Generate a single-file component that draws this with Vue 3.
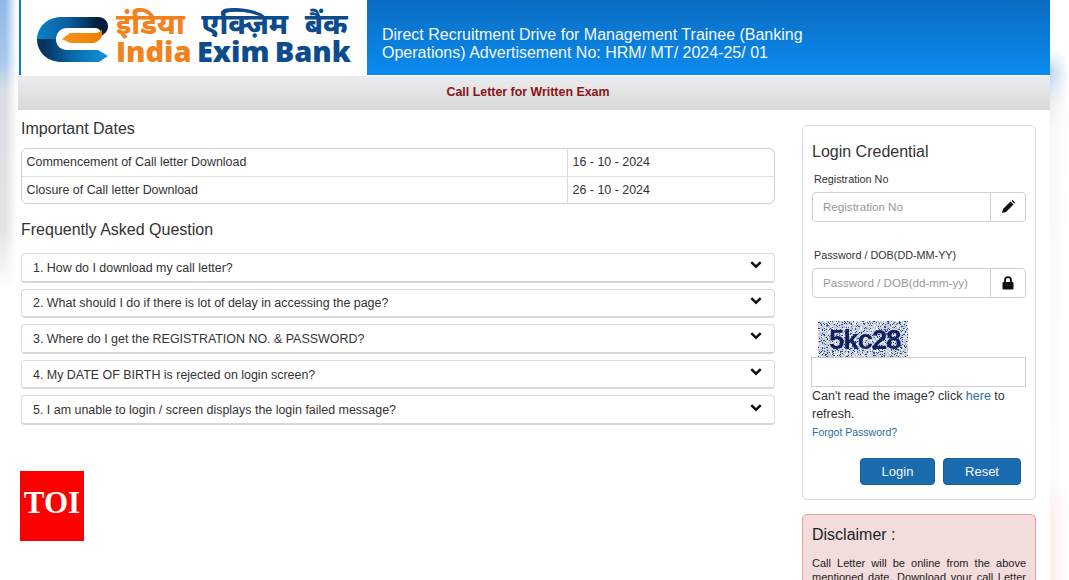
<template>
  <div class="page">
    <div class="side side-left"></div>

    <div class="sheet">
      <header class="top">
        <div class="logo">
          <svg class="logo-mark" viewBox="0 0 72 45" width="72" height="45">
            <defs>
              <linearGradient id="bandTop" x1="0" y1="0" x2="1" y2="0">
                <stop offset="0" stop-color="#0d80c8" />
                <stop offset="0.45" stop-color="#0b5c9e" />
                <stop offset="0.85" stop-color="#04203f" />
              </linearGradient>
              <linearGradient id="bandBottom" x1="0" y1="0" x2="1" y2="0">
                <stop offset="0.1" stop-color="#06325f" />
                <stop offset="0.5" stop-color="#0b68ab" />
                <stop offset="1" stop-color="#1890d8" />
              </linearGradient>
              <linearGradient id="bandBar" x1="0" y1="0" x2="1" y2="0">
                <stop offset="0" stop-color="#f7941d" />
                <stop offset="1" stop-color="#ef7d00" />
              </linearGradient>
            </defs>
            <path fill="url(#bandTop)" d="M25 0H61C67 0 71 4 71 9C71 14 68 17 64 19C65 14 62 11 58 11H30C23 11 19 16 19 23H0C0 10 10 0 25 0Z" />
            <path fill="url(#bandBottom)" d="M0 22H19C19 29 24 33 30 33H61L71 39L62 45H25C10 45 0 35 0 22Z" />
            <path fill="url(#bandBar)" d="M25 22L33 16H58C62 16 64 14 64 12C66 15 66 20 62 23C60 25 58 26 56 26H33Z" />
          </svg>
          <div class="logo-text">
            <div class="logo-hi"><span class="orange">इंडिया</span> <span class="navy">एक्ज़िम बैंक</span></div>
            <div class="logo-en"><span class="orange">India</span> <span class="navy">Exim Bank</span></div>
          </div>
        </div>
        <div class="top-title">Direct Recruitment Drive for Management Trainee (Banking Operations) Advertisement No: HRM/ MT/ 2024-25/ 01</div>
      </header>

      <div class="subbar">Call Letter for Written Exam</div>

      <div class="main">
        <section class="left">
          <h3 class="dates-title">Important Dates</h3>
          <div class="dates">
            <div v-for="row in dates" :key="row.label" class="date-row">
              <div class="date-label">{{ row.label }}</div>
              <div class="date-value">{{ row.value }}</div>
            </div>
          </div>

          <h3 class="faq-title">Frequently Asked Question</h3>
          <div class="faq">
            <div v-for="q in questions" :key="q" class="faq-item">
              <span>{{ q }}</span>
              <svg viewBox="0 0 14 10" width="12" height="9">
                <path d="M1.5 2.2L7 7.6L12.5 2.2" fill="none" stroke="#111" stroke-width="2.8" />
              </svg>
            </div>
          </div>
        </section>

        <aside class="right">
          <div class="panel">
            <h3 class="panel-title">Login Credential</h3>
            <label class="field-label">Registration No</label>
            <div class="group">
              <input class="group-input" placeholder="Registration No" />
              <span class="addon">
                <svg viewBox="0 0 14 14" width="14" height="14">
                  <path d="M1 13L2 9L9.5 1.5L12.5 4.5L5 12Z" fill="#111" />
                  <path d="M10.5 0.8L11.6 0L14 2.4L13.2 3.5Z" fill="#111" />
                </svg>
              </span>
            </div>

            <label class="field-label second">Password / DOB(DD-MM-YY)</label>
            <div class="group">
              <input class="group-input" placeholder="Password / DOB(dd-mm-yy)" />
              <span class="addon">
                <svg viewBox="0 0 12 14" width="12" height="14">
                  <path d="M3 6V4.2C3 2.4 4.3 1.2 6 1.2S9 2.4 9 4.2V6" fill="none" stroke="#111" stroke-width="1.8" />
                  <rect x="0.5" y="6" width="11" height="7.5" rx="1" fill="#111" />
                </svg>
              </span>
            </div>

            <div class="captcha">
              <svg viewBox="0 0 90 36" width="90" height="36">
                <rect width="90" height="36" fill="#c3cbdc" />
                <rect v-for="d in noise" :key="d.id" :x="d.x" :y="d.y" width="1" height="1" :fill="d.c" />
                <text x="11" y="28" class="captcha-text">5kc28</text>
              </svg>
            </div>
            <input class="captcha-input" />

            <p class="refresh">Can't read the image? click <a>here</a> to refresh.</p>
            <a class="forgot">Forgot Password?</a>

            <div class="actions">
              <button class="btn login">Login</button>
              <button class="btn reset">Reset</button>
            </div>
          </div>

          <div class="disclaimer">
            <h3>Disclaimer :</h3>
            <p>Call Letter will be online from the above mentioned date. Download your call Letter</p>
          </div>
        </aside>
      </div>
    </div>

    <div class="side side-right"></div>

    <div class="toi">TOI</div>
  </div>
</template>

<script setup>
const dates = [
  { label: "Commencement of Call letter Download", value: "16 - 10 - 2024" },
  { label: "Closure of Call letter Download", value: "26 - 10 - 2024" },
];

const questions = [
  "1. How do I download my call letter?",
  "2. What should I do if there is lot of delay in accessing the page?",
  "3. Where do I get the REGISTRATION NO. & PASSWORD?",
  "4. My DATE OF BIRTH is rejected on login screen?",
  "5. I am unable to login / screen displays the login failed message?",
];

// speckle behind the captcha word, seeded so every run looks the same
let seed = 7;
const rnd = () => {
  seed = (seed * 16807) % 2147483647;
  return seed / 2147483647;
};
const colors = ["#ffffff", "#ffffff", "#f2f4f8", "#1c3f86", "#3b5a9c"];
const noise = [];
for (let i = 0; i < 1500; i++) {
  noise.push({
    id: i,
    x: Math.floor(rnd() * 90),
    y: Math.floor(rnd() * 36),
    c: colors[Math.floor(rnd() * colors.length)],
  });
}
</script>

<style>
html,
body {
  margin: 0;
  background: #fff;
}
</style>

<style scoped>
.page {
  position: relative;
  display: flex;
  width: 1069px;
  height: 580px;
  overflow: hidden;
  background: #fff;
  font-family: "Liberation Sans", Arial, sans-serif;
  color: #333;
}

.side {
  flex: none;
}
.side-left {
  width: 18px;
  background:
    linear-gradient(to right, rgba(255, 255, 255, 0) 30%, #fff 95%),
    linear-gradient(to bottom, #8fb9e6 0, #a9c9ec 62px, #d9dde3 90px, #e4e4e6 230px, #fff 290px);
}
.side-right {
  width: 19px;
  background:
    linear-gradient(to right, rgba(255, 255, 255, 0.2) 0, #fff 100%),
    linear-gradient(to bottom, #fff 50px, #a8caf0 72px, #e7e7ea 100px, #f6f6f7 130px, #fbfbfd 480px, #fbe9e9 520px);
}

.sheet {
  flex: 1;
  min-width: 0;
  display: flex;
  flex-direction: column;
}

.top {
  display: flex;
  height: 75px;
  flex: none;
  background: linear-gradient(to bottom, #0a6cc0, #0b8bf0);
}
.logo {
  width: 346px;
  margin-left: 3px;
  display: flex;
  align-items: flex-start;
  flex: none;
  background: #fff;
  position: relative;
  box-sizing: border-box;
  padding: 17px 0 0 16px;
  gap: 7px;
}
.logo::before {
  content: "";
  position: absolute;
  left: -2px;
  top: 0;
  bottom: 0;
  width: 2px;
  background: #0a7fe0;
}
.logo::after {
  content: "";
  position: absolute;
  left: -3px;
  top: 0;
  bottom: 0;
  width: 1px;
  background: #fff;
}
.logo-text {
  margin-top: -7px;
  white-space: nowrap;
  font-family: "Open Sans", "Noto Sans", sans-serif;
  font-weight: 800;
}
.logo-hi {
  height: 25px;
  font-size: 29px;
  line-height: 25px;
  word-spacing: 9px;
  font-family: "Noto Sans", "Noto Sans Devanagari", "Lohit Devanagari", sans-serif;
}
.logo-en {
  font-size: 29px;
  line-height: 27px;
  letter-spacing: -0.05px;
  word-spacing: -2px;
  margin-top: 2px;
}
.orange {
  color: #f2821c;
}
.navy {
  color: #0d4c8c;
}
.top-title {
  width: 440px;
  margin: 26px 0 0 15px;
  color: #f2f8fe;
  font-size: 16px;
  line-height: 18px;
}

.subbar {
  flex: none;
  height: 34px;
  margin-top: 1px;
  padding-right: 12px;
  background: linear-gradient(to bottom, #ececee, #d8d7da);
  text-align: center;
  font-size: 12.4px;
  font-weight: 700;
  line-height: 32px;
  color: #8c1414;
}

.main {
  flex: 1;
  display: flex;
  min-height: 0;
}

.left {
  width: 754px;
  margin-left: 3px;
  flex: none;
}
h3 {
  margin: 0;
  font-weight: 400;
}
.dates-title,
.faq-title {
  font-size: 16px;
  line-height: 18px;
  color: #333;
}
.dates-title {
  margin: 10px 0 10px 0;
}
.dates {
  border: 1px solid #cfcfcf;
  border-radius: 6px;
}
.date-row {
  display: flex;
  height: 27px;
  box-sizing: border-box;
  font-size: 12.45px;
  line-height: 27px;
}
.date-row + .date-row {
  border-top: 1px solid #e2e2e2;
}
.date-label {
  width: 540px;
  padding-left: 4.5px;
  border-right: 1px solid #dcdcdc;
}
.date-value {
  padding-left: 5px;
}

.faq-title {
  margin: 17px 0 14px 0;
}
.faq {
  display: flex;
  flex-direction: column;
  gap: 6px;
}
.faq-item {
  height: 29.6px;
  box-sizing: border-box;
  display: flex;
  align-items: center;
  justify-content: space-between;
  padding: 1px 12px 0 11px;
  border: 1px solid #dcdcdc;
  border-bottom: 2px solid #d8d8d8;
  border-radius: 4px;
  font-size: 12.45px;
}
.faq-item svg {
  margin-top: -6px;
}

.right {
  margin-left: 27px;
  width: 234px;
  flex: none;
}
.panel {
  margin-top: 15px;
  height: 375px;
  box-sizing: border-box;
  padding: 0 9px;
  border: 1px solid #d8d8d8;
  border-radius: 5px;
}
.panel-title {
  margin-top: 17px;
  font-size: 16px;
  line-height: 18px;
}
.field-label {
  display: block;
  margin: 11px 0 0 2px;
  font-size: 10.8px;
  line-height: 14px;
}
.field-label.second {
  margin-top: 26px;
}
.group {
  display: flex;
  height: 30px;
  margin-top: 6px;
  box-sizing: border-box;
  border: 1px solid #d0d0d0;
  border-radius: 4px;
}
.group-input {
  flex: 1;
  min-width: 0;
  padding: 0 0 2px 10px;
  border: 0;
  border-right: 1px solid #d0d0d0;
  outline: 0;
  background: transparent;
  font-family: inherit;
  font-size: 11.6px;
}
.group-input::placeholder {
  color: #999;
}
.addon {
  width: 34px;
  flex: none;
  display: flex;
  align-items: center;
  justify-content: center;
}

.captcha {
  height: 36px;
  margin: 23px 0 0 6px;
}
.captcha svg {
  display: block;
  filter: blur(0.4px);
}
.captcha-text {
  font-family: "Liberation Sans", sans-serif;
  font-size: 28px;
  font-weight: 700;
  letter-spacing: -1.3px;
  fill: #12205e;
}
.captcha-input {
  display: block;
  width: 215px;
  height: 30px;
  margin-left: -1px;
  box-sizing: border-box;
  border: 1px solid #cfcfcf;
  outline: 0;
  background: #fff;
}
.refresh {
  margin: 0;
  font-size: 12.5px;
  line-height: 18px;
}
.refresh a {
  color: #2a6da8;
}
.forgot {
  display: block;
  margin-top: 2px;
  font-size: 10.5px;
  line-height: 14px;
  color: #2a6da8;
}
.actions {
  display: flex;
  justify-content: flex-end;
  gap: 8px;
  margin-top: 19px;
  padding-right: 5px;
}
.btn {
  height: 27px;
  padding: 0;
  border: 1px solid #185f9c;
  border-radius: 4px;
  background: #1b6cae;
  color: #f4f8fc;
  font-family: inherit;
  font-size: 13px;
}
.login {
  width: 75px;
}
.reset {
  width: 78px;
}

.disclaimer {
  margin-top: 14px;
  padding: 11px 9px 10px;
  border: 1px solid #ee9c9c;
  border-radius: 5px;
  background: #f2dcdc;
  color: #222;
}
.disclaimer h3 {
  font-size: 16px;
  line-height: 18px;
}
.disclaimer p {
  margin: 12px 0 0;
  font-size: 11px;
  line-height: 14.4px;
  text-align: justify;
  text-align-last: justify;
}

.toi {
  position: absolute;
  left: 20px;
  top: 471px;
  width: 64px;
  height: 70px;
  background: #ff0000;
  color: #fff;
  font-family: "Liberation Serif", serif;
  font-size: 31px;
  font-weight: 700;
  line-height: 64px;
  text-align: center;
}
</style>
